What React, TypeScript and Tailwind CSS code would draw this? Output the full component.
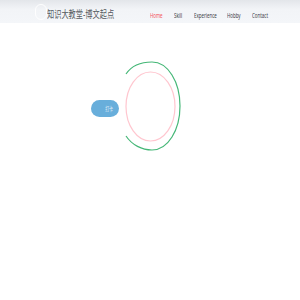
import React from "react";

const navItems = [
  { label: "Home", active: true, w: "w-[24px]" },
  { label: "Skill", active: false, w: "w-[20px]" },
  { label: "Experience", active: false, w: "w-[33px]" },
  { label: "Hobby", active: false, w: "w-[25px]" },
  { label: "Contact", active: false, w: "w-[24px]" },
];

export default function App() {
  return (
    <div className="w-[300px] h-[300px] bg-white overflow-hidden" style={{ fontFamily: '"Noto Sans", "Noto Sans CJK SC", sans-serif' }}>
      <header className="h-[23px] bg-gradient-to-b from-[#e3e6ea] via-[#f2f4f7] via-40% to-[#f4f6f9] flex items-center">
        <div className="ml-[35px] w-[12px] h-[16px] rounded-full border border-white/90 shrink-0" />
        <div className="w-[72px] overflow-visible">
          <span className="inline-block origin-left scale-x-[0.72] whitespace-nowrap text-[10px] leading-none text-[#555a60]">
            知识大教堂-博文起点
          </span>
        </div>
        <nav className="ml-[31px] flex items-center">
          {navItems.map((n) => (
            <div key={n.label} className={`${n.w} shrink-0`}>
              <span
                className={`inline-block origin-left scale-x-[0.68] whitespace-nowrap text-[6.5px] leading-none ${
                  n.active ? "text-[#f4515a]" : "text-[#3f4248]"
                }`}
              >
                {n.label}
              </span>
            </div>
          ))}
        </nav>
      </header>
      <main className="flex items-start pl-[91px] pt-[37px]">
        <button className="mt-[40px] w-[28px] h-[17px] rounded-full bg-[#68aedb] flex items-center justify-end pr-[6px]">
          <span className="inline-block origin-right scale-x-[0.65] whitespace-nowrap text-[6px] leading-none text-white/80">
            打卡
          </span>
        </button>
        <svg width="58" height="92" viewBox="0 0 58 92" className="ml-[5px]">
          <ellipse cx="26.5" cy="46.5" rx="24.5" ry="34.5" fill="none" stroke="#ffc6cf" strokeWidth="1.2" />
          <path
            d="M2,14 C8,5 18,2 28,2 C44,2 56,22 56,46 C56,70 44,90 28,90 C18,90 8,85 2,76"
            fill="none"
            stroke="#45b777"
            strokeWidth="1.2"
          />
        </svg>
      </main>
    </div>
  );
}
